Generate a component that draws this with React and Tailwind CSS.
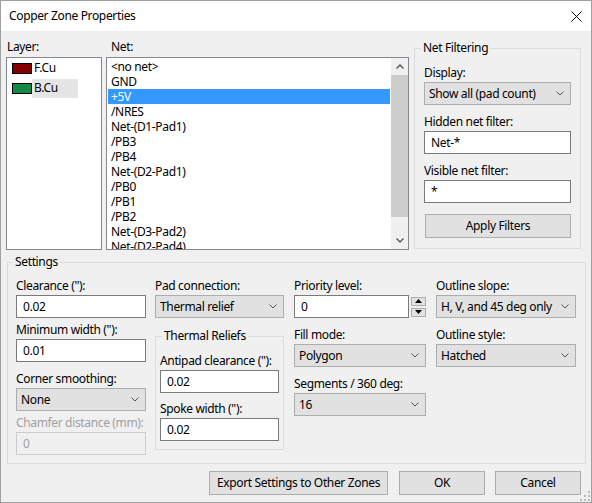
import React from "react";

const NETS = [
  "<no net>",
  "GND",
  "+5V",
  "/NRES",
  "Net-(D1-Pad1)",
  "/PB3",
  "/PB4",
  "Net-(D2-Pad1)",
  "/PB0",
  "/PB1",
  "/PB2",
  "Net-(D3-Pad2)",
  "Net-(D2-Pad4)",
];

function Chevron() {
  return (
    <svg width="8" height="5" viewBox="0 0 8 5" className="shrink-0">
      <polyline points="0.5,0.5 4,4 7.5,0.5" fill="none" stroke="#555" strokeWidth="1" />
    </svg>
  );
}

function Select({ value, className = "" }) {
  return (
    <div className={"flex items-center h-[23px] border border-[#adadad] bg-[#e1e1e1] pl-[4px] pr-[6px] " + className}>
      <span className="flex-1 whitespace-nowrap overflow-hidden">{value}</span>
      <Chevron />
    </div>
  );
}

function Input({ value, className = "" }) {
  return (
    <div className={"flex items-center h-[23px] border border-[#7a7a7a] bg-white pl-[6px] " + className}>
      <span className="whitespace-nowrap">{value}</span>
    </div>
  );
}

function Label({ children, className = "" }) {
  return <div className={"h-[16px] leading-[16px] whitespace-nowrap " + className}>{children}</div>;
}

function GroupTitle({ children, left }) {
  return (
    <span className={"absolute top-[-9px] px-[2px] bg-[#f0f0f0] leading-[16px] whitespace-nowrap " + left}>
      {children}
    </span>
  );
}

function Button({ children, className = "" }) {
  return (
    <div className={"flex items-center justify-center h-[24px] border border-[#adadad] bg-[#e1e1e1] " + className}>
      {children}
    </div>
  );
}

function SpinBtn({ up }) {
  return (
    <div className="w-[15px] h-[9px] border border-[#adadad] bg-[#e1e1e1] flex items-center justify-center">
      <svg width="7" height="4" viewBox="0 0 7 4">
        {up ? <polygon points="0,4 7,4 3.5,0" fill="#000" /> : <polygon points="0,0 7,0 3.5,4" fill="#000" />}
      </svg>
    </div>
  );
}

export default function App() {
  return (
    <div className="relative w-[592px] h-[503px] border border-[#a0a0a0] bg-[#f0f0f0] flex flex-col text-[12px] leading-[16px] tracking-[-0.35px] text-black font-['Noto_Sans',sans-serif]">
      {/* Title bar */}
      <div className="h-[30px] shrink-0 bg-white flex items-center pl-[8px] pr-[9px]">
        <span className="flex-1">Copper Zone Properties</span>
        <svg width="11" height="11" viewBox="0 0 11 11">
          <path d="M0.5 0.5L10.5 10.5M10.5 0.5L0.5 10.5" stroke="#000" strokeWidth="1" />
        </svg>
      </div>

      {/* Top section */}
      <div className="flex pt-[8px] pl-[5px]">
        {/* Layer */}
        <div className="w-[96px] flex flex-col">
          <Label className="pl-[1px]">Layer:</Label>
          <div className="mt-[2px] h-[193px] border border-[#828790] bg-white">
            <div className="flex items-center h-[20px] pl-[5px]">
              <div className="w-[20px] h-[11px] border border-black bg-[#840000]" />
              <span className="w-[46px] h-[19px] flex items-center pl-[2px]">F.Cu</span>
            </div>
            <div className="flex items-center h-[20px] pl-[5px]">
              <div className="w-[20px] h-[11px] border border-black bg-[#138a46]" />
              <span className="w-[46px] h-[19px] flex items-center pl-[2px] bg-[#e5e5e5]">B.Cu</span>
            </div>
          </div>
        </div>

        {/* Net */}
        <div className="ml-[4px] w-[303px] flex flex-col">
          <Label className="pl-[5px]">Net:</Label>
          <div className="mt-[2px] h-[193px] border border-[#828790] bg-white flex overflow-hidden">
            <div className="flex-1 p-[1px] overflow-hidden">
              {NETS.map((n) => (
                <div
                  key={n}
                  className={
                    "h-[15px] leading-[15px] pl-[3px] whitespace-nowrap " +
                    (n === "+5V" ? "bg-[#3399ff] text-white" : "")
                  }
                >
                  {n}
                </div>
              ))}
            </div>
            <div className="w-[17px] bg-[#f0f0f0] flex flex-col">
              <div className="h-[17px] flex items-center justify-center">
                <svg width="8" height="5" viewBox="0 0 8 5">
                  <polyline points="0.5,4.5 4,1 7.5,4.5" fill="none" stroke="#606060" strokeWidth="1.5" />
                </svg>
              </div>
              <div className="h-[142px] bg-[#cdcdcd]" />
              <div className="flex-1" />
              <div className="h-[17px] flex items-center justify-center">
                <svg width="8" height="5" viewBox="0 0 8 5">
                  <polyline points="0.5,0.5 4,4 7.5,0.5" fill="none" stroke="#606060" strokeWidth="1.5" />
                </svg>
              </div>
            </div>
          </div>
        </div>

        {/* Net Filtering */}
        <div className="ml-[5px] mt-[9px] w-[167px] h-[201px] relative border border-[#dcdcdc] px-[9px] flex flex-col">
          <GroupTitle left="left-[6px]">Net Filtering</GroupTitle>
          <Label className="mt-[16px]">Display:</Label>
          <Select value="Show all (pad count)" className="mt-[1px]" />
          <Label className="mt-[9px]">Hidden net filter:</Label>
          <Input value="Net-*" className="mt-[1px]" />
          <Label className="mt-[9px]">Visible net filter:</Label>
          <Input value="*" className="mt-[1px]" />
          <Button className="mt-[11px] ml-[1px]">Apply Filters</Button>
        </div>
      </div>

      {/* Settings */}
      <div className="ml-[6px] mt-[12px] w-[579px] h-[202px] relative border border-[#dcdcdc] pl-[8px] flex">
        <GroupTitle left="left-[5px]">Settings</GroupTitle>

        {/* Column 1 */}
        <div className="w-[130px] flex flex-col">
          <Label className="mt-[15px]">Clearance ("):</Label>
          <Input value="0.02" className="mt-[1px]" />
          <Label className="mt-[4px]">Minimum width ("):</Label>
          <Input value="0.01" className="mt-[1px]" />
          <Label className="mt-[9px]">Corner smoothing:</Label>
          <Select value="None" className="mt-[1px]" />
          <Label className="mt-[4px] text-[#a0a0a0]">Chamfer distance (mm):</Label>
          <div className="mt-[1px] h-[23px] border border-[#cccccc] bg-[#f0f0f0] pl-[6px] flex items-center text-[#a0a0a0]">
            0
          </div>
        </div>

        {/* Column 2 */}
        <div className="ml-[9px] w-[129px] flex flex-col">
          <Label className="mt-[15px]">Pad connection:</Label>
          <Select value="Thermal relief" className="mt-[1px]" />
          <div className="mt-[18px] h-[114px] relative border border-[#dcdcdc] px-[4px] flex flex-col">
            <GroupTitle left="left-[6px]">Thermal Reliefs</GroupTitle>
            <Label className="mt-[16px]">Antipad clearance ("):</Label>
            <Input value="0.02" className="mt-[1px]" />
            <Label className="mt-[8px]">Spoke width ("):</Label>
            <Input value="0.02" className="mt-[1px]" />
          </div>
        </div>

        {/* Column 3 */}
        <div className="ml-[10px] w-[132px] flex flex-col">
          <Label className="mt-[15px]">Priority level:</Label>
          <div className="mt-[1px] flex items-center">
            <Input value="0" className="w-[115px]" />
            <div className="ml-[2px] flex flex-col gap-[2px]">
              <SpinBtn up />
              <SpinBtn />
            </div>
          </div>
          <Label className="mt-[9px]">Fill mode:</Label>
          <Select value="Polygon" className="mt-[1px]" />
          <Label className="mt-[9px]">Segments / 360 deg:</Label>
          <Select value="16" className="mt-[1px]" />
        </div>

        {/* Column 4 */}
        <div className="ml-[10px] w-[140px] flex flex-col">
          <Label className="mt-[15px]">Outline slope:</Label>
          <Select value="H, V, and 45 deg only" className="mt-[1px]" />
          <Label className="mt-[9px]">Outline style:</Label>
          <Select value="Hatched" className="mt-[1px]" />
        </div>
      </div>

      {/* Buttons */}
      <div className="flex justify-end mt-[7px] pr-[10px]">
        <Button className="w-[179px]">Export Settings to Other Zones</Button>
        <Button className="w-[86px] ml-[11px]">OK</Button>
        <Button className="w-[86px] ml-[10px]">Cancel</Button>
      </div>

      {/* Resize grip */}
      <svg width="10" height="10" viewBox="0 0 10 10" className="absolute right-[1px] bottom-[1px]">
        <rect x="8" y="0" width="2" height="2" fill="#bcbcbc" />
        <rect x="4" y="4" width="2" height="2" fill="#bcbcbc" />
        <rect x="8" y="4" width="2" height="2" fill="#bcbcbc" />
        <rect x="0" y="8" width="2" height="2" fill="#bcbcbc" />
        <rect x="4" y="8" width="2" height="2" fill="#bcbcbc" />
        <rect x="8" y="8" width="2" height="2" fill="#bcbcbc" />
      </svg>
    </div>
  );
}
